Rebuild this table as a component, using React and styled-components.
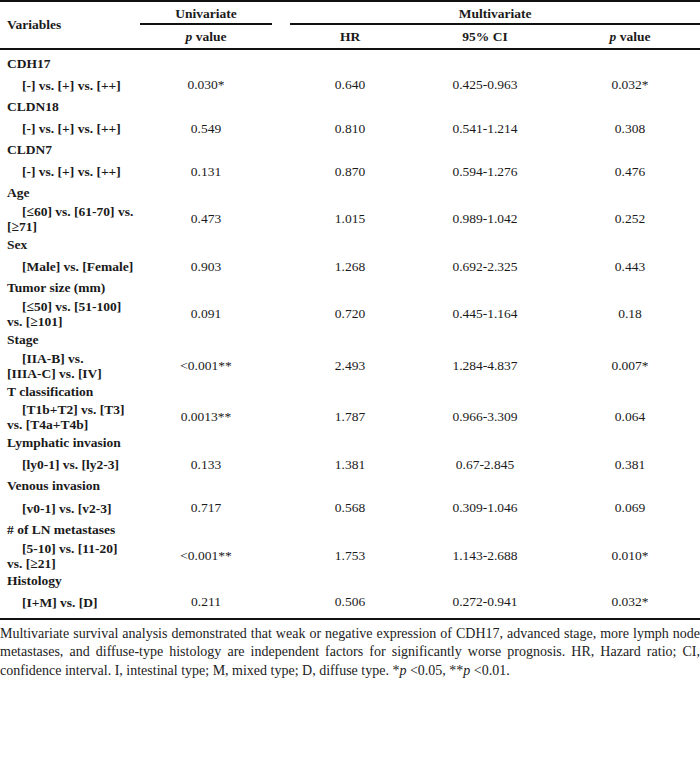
import styled, { createGlobalStyle } from "styled-components";

const GlobalStyle = createGlobalStyle`
  body {
    margin: 0;
    background: #fff;
    font-family: "Liberation Serif", "Times New Roman", serif;
    color: #1a1a1a;
  }
`;

const Page = styled.div`
  width: 700px;
`;

const Table = styled.table`
  width: 700px;
  border-collapse: collapse;
  table-layout: fixed;
  border-top: 2px solid #111;
  border-bottom: 2px solid #111;
  font-size: 13.5px;
`;

const HeadRow = styled.tr`
  height: ${(p) => p.$h}px;
`;

const Th = styled.th`
  padding: ${(p) => p.$top || 0}px ${(p) => (p.$align === "left" ? "7px" : "0")} 0;
  text-align: ${(p) => p.$align || "center"};
  font-weight: bold;
  vertical-align: middle;
  border-bottom: ${(p) => (p.$line ? "2px solid #111" : "none")};
`;

const Tr = styled.tr`
  height: ${(p) => p.$h}px;
`;

const GroupCell = styled.td`
  padding: ${(p) => p.$top || 0}px 7px 0;
  font-weight: bold;
  white-space: nowrap;
  vertical-align: middle;
`;

const LabelCell = styled.td`
  padding: 0 0 ${(p) => p.$bottom || 0}px 7px;
  font-weight: bold;
  line-height: 15px;
  vertical-align: middle;
  white-space: nowrap;
`;

const Line = styled.div`
  padding-left: ${(p) => (p.$first ? "15px" : "0")};
`;

const Val = styled.td`
  padding: 0 0 ${(p) => p.$bottom || 0}px;
  text-align: center;
  vertical-align: middle;
`;

const Caption = styled.div`
  margin-top: 5px;
  font-size: 14px;
  line-height: 18.5px;
  color: #222;
`;

const CaptionLine = styled.span`
  display: block;
  white-space: nowrap;
  text-align: ${(p) => (p.$last ? "left" : "justify")};
  text-align-last: ${(p) => (p.$last ? "left" : "justify")};
`;

const groups = [
  { name: "CDH17", label: ["[-] vs. [+] vs. [++]"], uni: "0.030*", hr: "0.640", ci: "0.425-0.963", p: "0.032*" },
  { name: "CLDN18", label: ["[-] vs. [+] vs. [++]"], uni: "0.549", hr: "0.810", ci: "0.541-1.214", p: "0.308" },
  { name: "CLDN7", label: ["[-] vs. [+] vs. [++]"], uni: "0.131", hr: "0.870", ci: "0.594-1.276", p: "0.476" },
  { name: "Age", label: ["[≤60] vs. [61-70] vs.", "[≥71]"], uni: "0.473", hr: "1.015", ci: "0.989-1.042", p: "0.252" },
  { name: "Sex", label: ["[Male] vs. [Female]"], uni: "0.903", hr: "1.268", ci: "0.692-2.325", p: "0.443" },
  { name: "Tumor size (mm)", label: ["[≤50] vs. [51-100]", "vs. [≥101]"], uni: "0.091", hr: "0.720", ci: "0.445-1.164", p: "0.18" },
  { name: "Stage", label: ["[IIA-B] vs.", "[IIIA-C] vs. [IV]"], uni: "<0.001**", hr: "2.493", ci: "1.284-4.837", p: "0.007*" },
  { name: "T classification", label: ["[T1b+T2] vs. [T3]", "vs. [T4a+T4b]"], uni: "0.0013**", hr: "1.787", ci: "0.966-3.309", p: "0.064" },
  { name: "Lymphatic invasion", label: ["[ly0-1] vs. [ly2-3]"], uni: "0.133", hr: "1.381", ci: "0.67-2.845", p: "0.381" },
  { name: "Venous invasion", label: ["[v0-1] vs. [v2-3]"], uni: "0.717", hr: "0.568", ci: "0.309-1.046", p: "0.069" },
  { name: "# of LN metastases", label: ["[5-10] vs. [11-20]", "vs. [≥21]"], uni: "<0.001**", hr: "1.753", ci: "1.143-2.688", p: "0.010*" },
  { name: "Histology", label: ["[I+M] vs. [D]"], uni: "0.211", hr: "0.506", ci: "0.272-0.941", p: "0.032*" },
];

const ROW = 21.6;
const DOUBLE = 30.1;
const EDGE = 4;

export default function App() {
  const lastIndex = groups.length - 1;
  return (
    <Page>
      <GlobalStyle />
      <Table>
        <colgroup>
          <col style={{ width: 140 }} />
          <col style={{ width: 132 }} />
          <col style={{ width: 18 }} />
          <col style={{ width: 120 }} />
          <col style={{ width: 150 }} />
          <col style={{ width: 140 }} />
        </colgroup>
        <thead>
          <HeadRow $h={23}>
            <Th $align="left" rowSpan={2} $line>
              Variables
            </Th>
            <Th $line $top={3}>
              Univariate
            </Th>
            <Th />
            <Th colSpan={3} $line $top={3}>
              Multivariate
            </Th>
          </HeadRow>
          <HeadRow $h={25}>
            <Th $line>
              <i>p</i> value
            </Th>
            <Th $line />
            <Th $line>HR</Th>
            <Th $line>95% CI</Th>
            <Th $line>
              <i>p</i> value
            </Th>
          </HeadRow>
        </thead>
        <tbody>
          {groups.map((g, idx) => {
            const first = idx === 0;
            const last = idx === lastIndex;
            const bottom = last ? EDGE + 1 : 0;
            return [
              <Tr key={g.name} $h={ROW + (first ? EDGE : 0)}>
                <GroupCell colSpan={6} $top={first ? EDGE : 0}>
                  {g.name}
                </GroupCell>
              </Tr>,
              <Tr key={g.name + "-v"} $h={(g.label.length > 1 ? DOUBLE : ROW) + bottom}>
                <LabelCell $bottom={bottom}>
                  {g.label.map((l, i) => (
                    <Line key={i} $first={i === 0}>
                      {l}
                    </Line>
                  ))}
                </LabelCell>
                <Val $bottom={bottom}>{g.uni}</Val>
                <Val $bottom={bottom} />
                <Val $bottom={bottom}>{g.hr}</Val>
                <Val $bottom={bottom}>{g.ci}</Val>
                <Val $bottom={bottom}>{g.p}</Val>
              </Tr>,
            ];
          })}
        </tbody>
      </Table>
      <Caption>
        <CaptionLine>
          Multivariate survival analysis demonstrated that weak or negative expression of CDH17, advanced stage, more
          lymph node
        </CaptionLine>
        <CaptionLine>
          metastases, and diffuse-type histology are independent factors for significantly worse prognosis. HR, Hazard
          ratio; CI,
        </CaptionLine>
        <CaptionLine $last>
          confidence interval. I, intestinal type; M, mixed type; D, diffuse type. *<i>p</i> &lt;0.05, **<i>p</i>{" "}
          &lt;0.01.
        </CaptionLine>
      </Caption>
    </Page>
  );
}
